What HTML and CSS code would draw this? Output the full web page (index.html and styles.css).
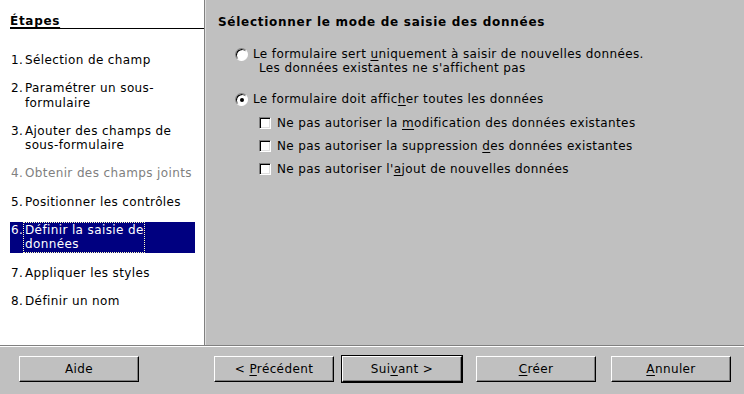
FILE: index.html
```html
<!DOCTYPE html>
<html lang="fr">
<head>
    <meta charset="UTF-8">
    <title>Assistant Formulaire</title>
    <link rel="stylesheet" href="styles.css">
</head>
<body>
    <div class="main">
        <div class="steps">
            <h2>Étapes</h2>
            <ol class="step-list">
                <li><span class="num">1.</span><span class="label">Sélection de champ</span></li>
                <li><span class="num">2.</span><span class="label">Paramétrer un sous-<br>formulaire</span></li>
                <li><span class="num">3.</span><span class="label">Ajouter des champs de<br>sous-formulaire</span></li>
                <li class="disabled"><span class="num">4.</span><span class="label">Obtenir des champs joints</span></li>
                <li><span class="num">5.</span><span class="label">Positionner les contrôles</span></li>
                <li class="active"><span class="num">6.</span><span class="label">Définir la saisie de<br>données</span></li>
                <li><span class="num">7.</span><span class="label">Appliquer les styles</span></li>
                <li><span class="num">8.</span><span class="label">Définir un nom</span></li>
            </ol>
        </div>
        <div class="content">
            <h1>Sélectionner le mode de saisie des données</h1>
            <div class="option">
                <span class="radio"></span>
                <span>Le formulaire sert <u>u</u>niquement à saisir de nouvelles données.</span>
            </div>
            <div class="option-note">Les données existantes ne s'affichent pas</div>
            <div class="option second">
                <span class="radio checked"></span>
                <span>Le formulaire doit affic<u>h</u>er toutes les données</span>
            </div>
            <div class="checks">
                <div class="check-row"><span class="checkbox"></span><span>Ne pas autoriser la <u>m</u>odification des données existantes</span></div>
                <div class="check-row"><span class="checkbox"></span><span>Ne pas autoriser la suppression <u>d</u>es données existantes</span></div>
                <div class="check-row"><span class="checkbox"></span><span>Ne pas autoriser l'<u>a</u>jout de nouvelles données</span></div>
            </div>
        </div>
    </div>

    <div class="footer">
        <button class="btn help">Aide</button>
        <button class="btn prev">&lt; <u>P</u>récédent</button>
        <button class="btn next default">Sui<u>v</u>ant &gt;</button>
        <button class="btn create"><u>C</u>réer</button>
        <button class="btn cancel"><u>A</u>nnuler</button>
    </div>
</body>
</html>
```

FILE: styles.css
```css
body {
    margin: 0;
    padding: 0;
    background-color: #c0c0c0;
    color: #000;
    font-family: 'DejaVu Sans', sans-serif;
    font-size: 12px;
    letter-spacing: 0.38px;
    width: 744px;
    height: 394px;
    overflow: hidden;
}
u {
    text-decoration: underline;
    text-underline-offset: 2px;
}
.main {
    display: flex;
    height: 345px;
    border-bottom: 1px solid #808080;
}
.steps {
    width: 204px;
    background-color: #fff;
    border-right: 1px solid #808080;
}
.steps h2 {
    margin: 0 0 0 10px;
    padding-top: 15px;
    font-size: 12px;
    line-height: 13px;
    letter-spacing: 0.7px;
    text-decoration: underline;
    text-underline-offset: 2px;
    border-bottom: 1px solid #000;
}
.step-list {
    list-style: none;
    margin: 0;
    padding: 23px 9px 0 10px;
    display: flex;
    flex-direction: column;
    gap: 12px;
}
.step-list li {
    display: flex;
    line-height: 14.3px;
    padding: 1px 0 1px 1px;
}
.step-list .num {
    width: 12px;
    flex: none;
}
.step-list .label {
    border: 1px dotted transparent;
    padding-left: 1px;
    margin-top: -1px;
    margin-bottom: -1px;
}
.step-list .disabled {
    color: #808080;
}
.step-list .active {
    background-color: #000080;
    color: #fff;
}
.step-list .active .label {
    border-color: #ffffc0;
}
.content {
    flex: 1;
    border-left: 1px solid #dfdfdf;
    padding-left: 12px;
}
.content h1 {
    margin: 0;
    padding-top: 14px;
    font-size: 12px;
    line-height: 16px;
    font-weight: bold;
    letter-spacing: 0.72px;
}
.option {
    display: flex;
    align-items: center;
    margin: 17px 0 0 17px;
    line-height: 14px;
}
.option.second {
    margin-top: 17px;
}
.option-note {
    margin-left: 41px;
    line-height: 14px;
}
.radio {
    width: 11px;
    height: 11px;
    border-radius: 50%;
    background-color: #fff;
    border: 1px solid;
    border-color: #808080 #fff #fff #808080;
    box-shadow: inset 1px 1px 0 #000;
    margin-right: 5px;
    position: relative;
    flex: none;
}
.radio.checked::after {
    content: "";
    position: absolute;
    left: 4px;
    top: 4px;
    width: 4px;
    height: 4px;
    border-radius: 50%;
    background-color: #000;
}
.checks {
    margin: 10px 0 0 41px;
    display: flex;
    flex-direction: column;
    gap: 9px;
}
.check-row {
    display: flex;
    align-items: center;
    line-height: 14px;
}
.checkbox {
    width: 10px;
    height: 10px;
    background-color: #fff;
    border: 1px solid;
    border-color: #808080 #fff #fff #808080;
    box-shadow: inset 1px 1px 0 #000, inset -1px -1px 0 #dfdfdf;
    margin-right: 6px;
    flex: none;
}
.footer {
    border-top: 1px solid #fff;
    display: flex;
    padding: 9px 0 0 19px;
}
.btn {
    width: 120px;
    height: 26px;
    padding: 0;
    background-color: #c0c0c0;
    color: #000;
    font-family: 'DejaVu Sans', sans-serif;
    font-size: 12px;
    letter-spacing: 0.38px;
    border: 1px solid;
    border-color: #fff #000 #000 #fff;
    box-shadow: inset -1px -1px 0 #808080;
}
.btn.default {
    outline: 1px solid #000;
}
.prev {
    margin-left: 75px;
}
.next {
    margin-left: 8px;
}
.create {
    margin-left: 14px;
}
.cancel {
    margin-left: 15px;
}
```
